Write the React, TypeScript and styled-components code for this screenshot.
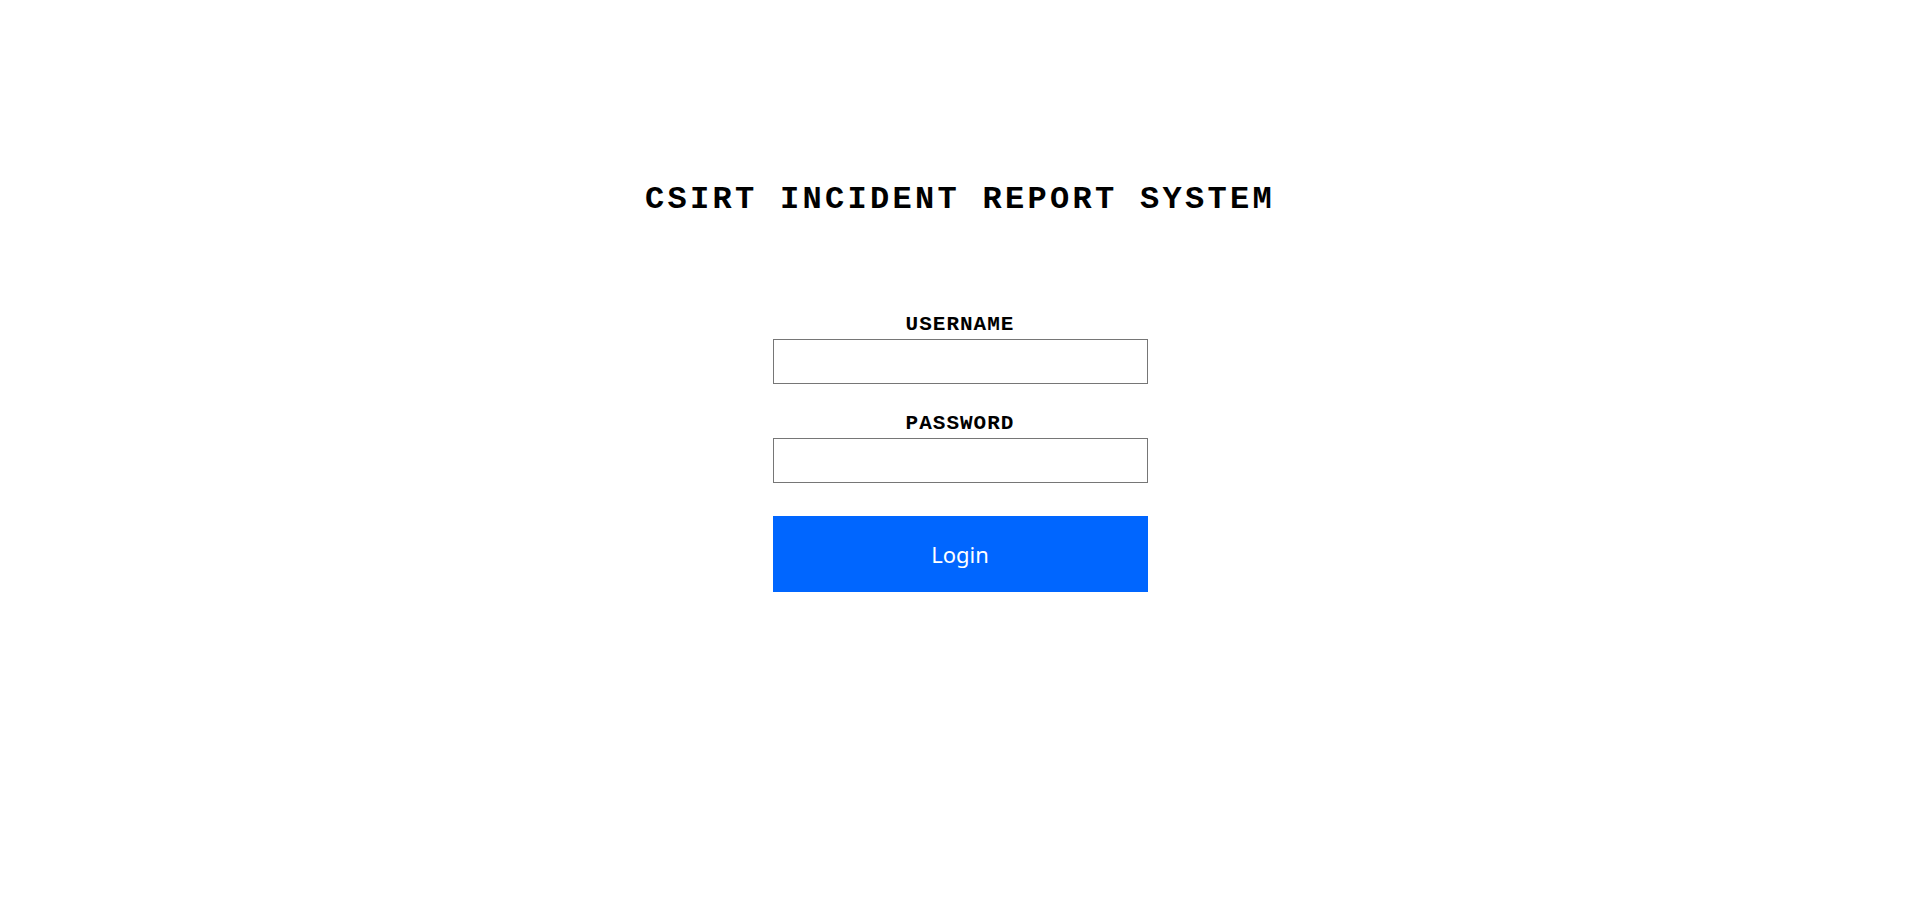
import * as React from 'react';
import styled, { createGlobalStyle } from 'styled-components';

// ------------------------------------
// Global
// ------------------------------------

const GlobalStyle = createGlobalStyle`
  html, body {
    margin: 0;
    padding: 0;
    background: #fff;
  }
`;

// ------------------------------------
// Component
// ------------------------------------

const App = () => (
  <>
    <GlobalStyle />
    <StyledPage>
      <StyledTitle>CSIRT INCIDENT REPORT SYSTEM</StyledTitle>
      <StyledForm onSubmit={(e) => e.preventDefault()}>
        <StyledField>
          <StyledLabel htmlFor="username">USERNAME</StyledLabel>
          <StyledInput id="username" type="text" />
        </StyledField>
        <StyledField $gap={29}>
          <StyledLabel htmlFor="password">PASSWORD</StyledLabel>
          <StyledInput id="password" type="password" />
        </StyledField>
        <StyledButton type="submit">Login</StyledButton>
      </StyledForm>
    </StyledPage>
  </>
);

export default App;

// ------------------------------------
// Styles
// ------------------------------------

const StyledPage = styled.div`
  min-height: 100vh;
  box-sizing: border-box;
  display: flex;
  flex-direction: column;
  align-items: center;
  padding-top: 184px;
`;

const StyledTitle = styled.h1`
  margin: 0;
  font-family: 'Courier New', 'Liberation Mono', monospace;
  font-weight: bold;
  font-size: 32px;
  line-height: 32px;
  letter-spacing: 3.3px;
  color: #000;
`;

const StyledForm = styled.form`
  width: 375px;
  margin-top: 98px;
  display: flex;
  flex-direction: column;
`;

const StyledField = styled.div<{ $gap?: number }>`
  display: flex;
  flex-direction: column;
  gap: 4px;
  margin-top: ${(p) => p.$gap ?? 0}px;
`;

const StyledLabel = styled.label`
  text-align: center;
  font-family: 'Courier New', 'Liberation Mono', monospace;
  font-weight: bold;
  font-size: 21px;
  line-height: 21px;
  letter-spacing: 1px;
  color: #000;
`;

const StyledInput = styled.input`
  box-sizing: border-box;
  width: 100%;
  height: 45px;
  margin: 0;
  padding: 0 8px;
  border: 1px solid #767676;
  border-radius: 0;
  font-size: 16px;
  outline: none;
`;

const StyledButton = styled.button`
  margin-top: 33px;
  height: 76px;
  width: 100%;
  border: none;
  border-radius: 0;
  background: #0066ff;
  color: #fff;
  font-family: 'Noto Sans', 'Open Sans', sans-serif;
  font-size: 22px;
  cursor: pointer;
`;
